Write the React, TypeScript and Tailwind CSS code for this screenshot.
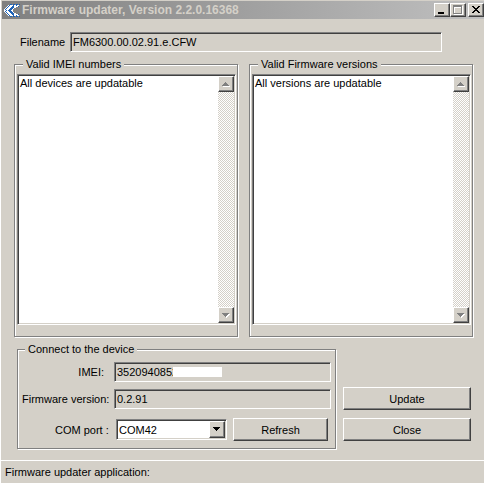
import { useState } from 'react';
import { clsx } from 'clsx';

const sunken =
  'border border-t-[#808080] border-l-[#808080] border-r-white border-b-white shadow-[inset_1px_1px_0_#404040,inset_-1px_-1px_0_#d4d0c8]';
const raised =
  'border border-t-white border-l-white border-r-[#404040] border-b-[#404040] shadow-[inset_-1px_-1px_0_#808080] bg-[#d4d0c8]';
const groove = 'min-w-0 border border-[#808080] shadow-[1px_1px_0_#fff,inset_1px_1px_0_#fff]';

// upper half of the logo, mirrored below its last row
const logoRows = [
  '......bb.bb.bb.b',
  '....wbwwwbwwbww.',
  '...wbwwwbbwwwwb.',
  '..wbwwwbbbww....',
  '.wbwwwbbbw......',
  'wbwwwbbbw.......',
  'wwbwbbbww.......',
];
const logoPixels = [...logoRows, ...logoRows.slice(0, -1).reverse()];
const logoColors: Record<string, string> = { b: '#1c62b8', w: '#ffffff' };

function Logo() {
  return (
    <svg className="h-4 w-4 shrink-0" viewBox="0 0 16 16" shapeRendering="crispEdges" aria-hidden="true">
      {logoPixels.map((row, y) =>
        row
          .split('')
          .map((pixel, x) =>
            logoColors[pixel] ? (
              <rect key={`${x}-${y}`} x={x} y={y + 2} width="1" height="1" fill={logoColors[pixel]} />
            ) : null
          )
      )}
    </svg>
  );
}

function ScrollButton({ direction }: { direction: 'up' | 'down' }) {
  const arrow = direction === 'up' ? 'M7 6h1v1h1v1h1v1h1v1H4V9h1V8h1V7h1z' : 'M4 6h7v1h-1v1H9v1H8v1H7V9H6V8H5V7H4z';
  return (
    <button type="button" aria-label={`Scroll ${direction}`} className={clsx(raised, 'h-4 w-4')}>
      <svg className="-m-px block h-4 w-4" viewBox="0 0 16 16" shapeRendering="crispEdges">
        <path d={arrow} fill="#fff" transform="translate(1 1)" />
        <path d={arrow} fill="#808080" />
      </svg>
    </button>
  );
}

function ListGroup({ title, text }: { title: string; text: string }) {
  return (
    <fieldset className={clsx(groove, 'flex-1 pt-[3px] pr-px pb-[11px] pl-[2px]')}>
      <legend className="ml-[6px] bg-[#d4d0c8] px-[3px]">{title}</legend>
      <div className={clsx(sunken, 'flex h-[251px] bg-white p-px')}>
        <textarea
          readOnly
          aria-label={title}
          value={text}
          className="min-w-0 flex-1 resize-none overflow-hidden px-px outline-none"
        />
        <div className="flex w-4 flex-col justify-between bg-[conic-gradient(#fff_25%,#d4d0c8_0_50%,#fff_0_75%,#d4d0c8_0)] bg-[length:2px_2px]">
          <ScrollButton direction="up" />
          <ScrollButton direction="down" />
        </div>
      </div>
    </fieldset>
  );
}

function TitleBar() {
  return (
    <header className="mt-px ml-px flex h-[18px] items-center bg-linear-to-r from-[#808080] to-[#c0c0c0] pl-[2px]">
      <Logo />
      <h1 className="ml-[2px] flex-1 truncate text-[12px] font-bold text-[#d4d0c8]">
        Firmware updater, Version 2.2.0.16368
      </h1>
      <button type="button" aria-label="Minimize" className={clsx(raised, 'h-[14px] w-4')}>
        <svg className="-m-px block h-[14px] w-4" viewBox="0 0 16 14" shapeRendering="crispEdges">
          <path d="M4 9h6v2H4z" />
        </svg>
      </button>
      <button type="button" aria-label="Maximize" disabled className={clsx(raised, 'h-[14px] w-4')}>
        <svg className="-m-px block h-[14px] w-4" viewBox="0 0 16 14" fill="none" shapeRendering="crispEdges">
          <path d="M4 3h9v9H4zM5 5v6h7V5z" fill="#fff" fillRule="evenodd" />
          <path d="M3 2h9v9H3zM4 4v6h7V4z" fill="#808080" fillRule="evenodd" />
        </svg>
      </button>
      <button type="button" aria-label="Close window" className={clsx(raised, 'ml-[2px] h-[14px] w-4')}>
        <svg className="-m-px block h-[14px] w-4" viewBox="0 0 16 14" shapeRendering="crispEdges">
          <path d="M4 3h2v1h1v1h2V4h1V3h2v1h-1v1h-1v1H9v1h1v1h1v1h1v1h-2V9H9V8H7v1H6v1H4V9h1V8h1V7h1V6H6V5H5V4H4z" />
        </svg>
      </button>
    </header>
  );
}

export default function App() {
  const [port, setPort] = useState('COM42');

  return (
    <main className="flow-root min-h-screen border-l border-white bg-[#d4d0c8] font-['Liberation_Sans',Arial,sans-serif] text-[11px] leading-[14px] text-black">
      <TitleBar />

      <div className="mt-[13px] mr-[42px] ml-[19px] flex items-center">
        <label htmlFor="filename" className="w-[50px]">
          Filename
        </label>
        <input
          id="filename"
          readOnly
          value="FM6300.00.02.91.e.CFW"
          className={clsx(sunken, 'h-5 min-w-0 flex-1 px-[2px] outline-none')}
        />
      </div>

      <div className="mt-[5px] mr-[11px] ml-[13px] flex gap-[11px]">
        <ListGroup title="Valid IMEI numbers" text="All devices are updatable" />
        <ListGroup title="Valid Firmware versions" text="All versions are updatable" />
      </div>

      <div className="mt-[5px] mr-[13px] ml-4 flex gap-[7px]">
        <fieldset className={clsx(groove, 'flex-1 pt-[6px] pr-1 pb-[7px] pl-1')}>
          <legend className="ml-[3px] bg-[#d4d0c8] px-[3px]">Connect to the device</legend>
          <div className="grid grid-cols-[82px_1fr] items-center gap-x-[10px]">
            <label htmlFor="imei" className="text-right">
              IMEI:
            </label>
            <div className="relative">
              <input
                id="imei"
                readOnly
                value="3520940852"
                className={clsx(sunken, 'block h-5 w-full px-[2px] outline-none')}
              />
              <span className="absolute top-[5px] left-[59px] h-[10px] w-[49px] bg-white" />
            </div>

            <label htmlFor="version" className="mt-[7px] text-right whitespace-nowrap">
              Firmware version:
            </label>
            <input
              id="version"
              readOnly
              value="0.2.91"
              className={clsx(sunken, 'mt-[7px] block h-5 w-full px-[2px] outline-none')}
            />

            <label htmlFor="port" className="mt-[9px] pl-[33px] whitespace-nowrap">
              COM port :
            </label>
            <div className="mt-[9px] mr-[3px] ml-[2px] flex items-center gap-[6px]">
              <div className="relative flex-1">
                <select
                  id="port"
                  value={port}
                  onChange={(e) => setPort(e.target.value)}
                  className={clsx(sunken, 'block h-[21px] w-full appearance-none bg-white pl-[2px] outline-none')}
                >
                  <option>COM42</option>
                </select>
                <span className={clsx(raised, 'pointer-events-none absolute top-[2px] right-[2px] h-[17px] w-4')}>
                  <svg className="-m-px block h-[17px] w-4" viewBox="0 0 16 17" shapeRendering="crispEdges">
                    <path d="M4 6h7v1h-1v1H9v1H8v1H7V9H6V8H5V7H4z" />
                  </svg>
                </span>
              </div>
              <button type="button" className={clsx(raised, 'h-[23px] w-[95px]')}>
                Refresh
              </button>
            </div>
          </div>
        </fieldset>

        <div className="flex w-32 flex-col justify-end gap-2 pb-2">
          <button type="button" className={clsx(raised, 'h-[23px]')}>
            Update
          </button>
          <button type="button" className={clsx(raised, 'h-[23px]')}>
            Close
          </button>
        </div>
      </div>

      <footer className="mt-[11px] border-t border-white px-1 pt-1">Firmware updater application:</footer>
    </main>
  );
}
